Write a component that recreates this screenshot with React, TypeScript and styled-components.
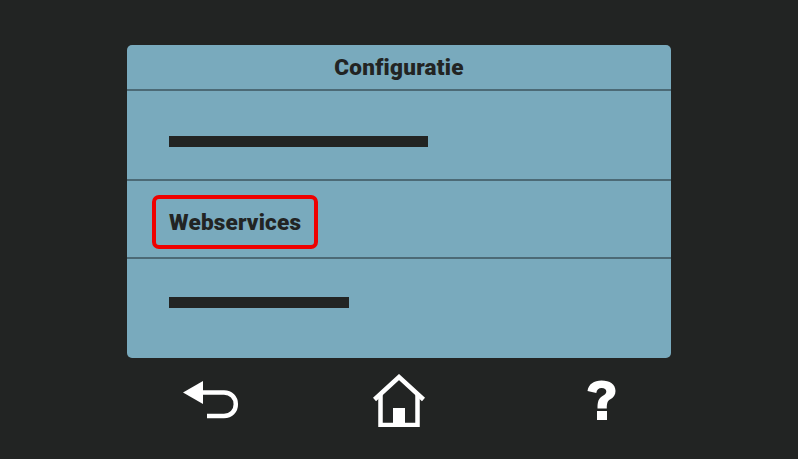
import React from "react";
import styled, { createGlobalStyle } from "styled-components";

const Global = createGlobalStyle`
  html, body { margin: 0; padding: 0; background: #222423; }
  #root { width: 798px; height: 459px; overflow: hidden; }
`;

const Screen = styled.div`
  width: 798px;
  height: 459px;
  box-sizing: border-box;
  padding: 45px 127px 0;
  background: #222423;
  display: flex;
  flex-direction: column;
  font-family: Roboto, "Liberation Sans", Arial, sans-serif;
`;

const Panel = styled.section`
  height: 313px;
  background: #79aabd;
  border-radius: 5px;
  display: flex;
  flex-direction: column;
  color: #222423;
`;

const Header = styled.h1`
  height: 44px;
  box-sizing: content-box;
  margin: 0;
  display: flex;
  align-items: center;
  justify-content: center;
  font-size: 22.5px;
  line-height: 42px;
  font-weight: 900;
  letter-spacing: 0.25px;
  border-bottom: 2px solid #4c6a76;
`;

const Row = styled.div<{ $h: number; $last?: boolean }>`
  height: ${(p) => p.$h}px;
  box-sizing: border-box;
  display: flex;
  align-items: center;
  padding-left: 25px;
  border-bottom: ${(p) => (p.$last ? "none" : "2px solid #4c6a76")};
`;

const Redacted = styled.div<{ $w: number; $shift: number }>`
  width: ${(p) => p.$w}px;
  height: 11px;
  margin-left: 17px;
  margin-top: ${(p) => p.$shift}px;
  background: #222423;
`;

const Highlight = styled.div`
  width: 166px;
  height: 54px;
  margin-top: 6px;
  box-sizing: border-box;
  border: 4px solid #ee0000;
  border-radius: 7px;
  display: flex;
  align-items: center;
  padding-left: 13px;
  font-size: 22.5px;
  font-weight: 900;
  letter-spacing: 0.2px;
`;

const Footer = styled.nav`
  display: flex;
  align-items: flex-start;
  padding: 16px 0 0 56px;
`;

const IconButton = styled.div<{ $gap: number; $top: number }>`
  margin-left: ${(p) => p.$gap}px;
  margin-top: ${(p) => p.$top}px;
  display: flex;
`;

export default function App() {
  return (
    <>
      <Global />
      <Screen>
        <Panel>
          <Header>Configuratie</Header>
          <Row $h={91}>
            <Redacted $w={259} $shift={13} />
          </Row>
          <Row $h={78}>
            <Highlight>Webservices</Highlight>
          </Row>
          <Row $h={100} $last>
            <Redacted $w={180} $shift={-12} />
          </Row>
        </Panel>
        <Footer>
          <IconButton $gap={0} $top={6}>
            <svg width="56" height="40" viewBox="0 0 56 40">
              <path d="M0 12.500 L20 1 V24 Z" fill="#fff" />
              <path d="M18 12.500 H41 C48 12.500 52.800 17.500 52.800 24.200 C52.800 31 48 36 41 36 H24" fill="none" stroke="#fff" strokeWidth="4.500" />
            </svg>
          </IconButton>
          <IconButton $gap={134} $top={0}>
            <svg width="54" height="53" viewBox="0 0 54 53">
              <path d="M1.500 25.500 L26 3 L50.500 25.500" fill="none" stroke="#fff" strokeWidth="4.500" />
              <path d="M7.500 19 V51 H44.500 V19" fill="none" stroke="#fff" strokeWidth="4.500" />
              <rect x="20" y="34" width="12" height="16" fill="#fff" />
            </svg>
          </IconButton>
          <IconButton $gap={160} $top={6}>
            <svg width="29" height="40" viewBox="0 0 29 40">
              <path d="M0.500 11 C1.500 4 7 0.500 14.500 0.500 C23 0.500 28.500 4.500 28.500 11 C28.500 15 26.500 17.500 23 19.500 C20.500 21 19.800 23 19.800 28.500 H10.500 C10.500 21.500 11.500 18.500 15.500 16 C18 14.500 19.300 13.500 19.300 11.500 C19.300 9.300 17.500 8 14.700 8 C11.700 8 9.800 9.800 9.300 13 Z" fill="#fff" />
              <rect x="10" y="31" width="10" height="9" fill="#fff" />
            </svg>
          </IconButton>
        </Footer>
      </Screen>
    </>
  );
}
